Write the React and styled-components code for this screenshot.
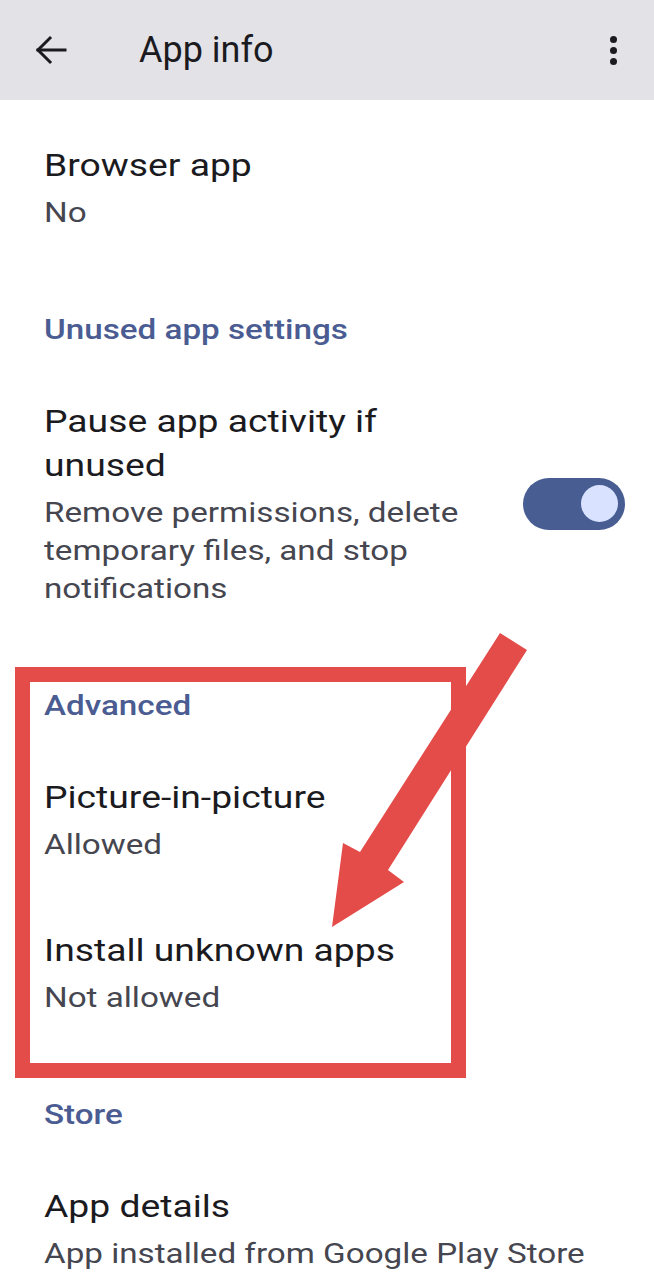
import React from 'react'
import styled, { createGlobalStyle } from 'styled-components'

// the phone screenshot is wider than tall in its pixels, so body text is stretched a little
const STRETCH = 1.165

const GlobalStyle = createGlobalStyle`
body {
    margin: 0;
    background: #fff;
    font-family: Roboto, "Liberation Sans", sans-serif;
}
`

const Screen = styled.div`
position: relative;
width: 654px;
height: 1280px;
overflow: hidden;
background: #fff;
`

const TopBar = styled.header`
display: flex;
align-items: center;
height: 100px;
background: #e3e2e7;
`

const BackButton = styled.div`
display: flex;
margin-left: 35px;
width: 32px;
height: 30px;
`

const BarTitle = styled.h1`
margin: 0 0 0 72px;
font-size: 36px;
font-weight: 400;
line-height: 100px;
color: #1b1b1f;
`

const MoreButton = styled.div`
display: flex;
flex-direction: column;
gap: 4px;
margin-left: auto;
margin-right: 37px;
`

const Dot = styled.span`
width: 7px;
height: 7px;
border-radius: 50%;
background: #1b1b1f;
`

const List = styled.div`
margin-top: 11px;
`

const Item = styled.div`
display: flex;
align-items: center;
gap: 24px;
padding: 32px 29px 32px 44px;
`

const ItemText = styled.div`
flex: 1;
min-width: 0;
`

const Wide = styled.div`
width: calc(100% / ${STRETCH});
transform: scaleX(${STRETCH});
transform-origin: 0 0;
`

const ItemTitle = styled.div`
font-size: 32px;
line-height: 44px;
color: #1b1b1f;
`

const ItemSummary = styled.div`
margin-top: 7px;
font-size: 28.5px;
line-height: 38px;
color: #45464f;
`

const SectionHeader = styled.div`
padding: 47px 29px 18px 44px;
`

const SectionTitle = styled.div`
font-size: 28.5px;
font-weight: 500;
line-height: 38px;
color: #4a5c92;
`

const Switch = styled.div`
flex-shrink: 0;
display: flex;
align-items: center;
justify-content: flex-end;
box-sizing: border-box;
width: 102px;
height: 52px;
padding-right: 7px;
border-radius: 26px;
background: ${props => props.on ? '#485d92' : '#74777f'};
`

const Knob = styled.span`
width: 37px;
height: 37px;
border-radius: 50%;
background: #d9e2ff;
`

const Markup = styled.svg`
position: absolute;
top: 0;
left: 0;
pointer-events: none;
`

const Section = ({ title }) => (
    <SectionHeader>
        <Wide>
            <SectionTitle>{title}</SectionTitle>
        </Wide>
    </SectionHeader>
)

const Pref = ({ title, summary, toggle }) => (
    <Item>
        <ItemText>
            <Wide>
                <ItemTitle>{title}</ItemTitle>
                <ItemSummary>{summary}</ItemSummary>
            </Wide>
        </ItemText>
        {toggle && <Switch on><Knob /></Switch>}
    </Item>
)

export default function App() {
    return (
        <Screen>
            <GlobalStyle />
            <TopBar>
                <BackButton>
                    <svg width="32" height="30" viewBox="0 0 32 30" fill="none" stroke="#1b1b1f" strokeWidth="3" strokeLinecap="square">
                        <path d="M3 15H30" />
                        <path d="M15 3L3 15L15 27" />
                    </svg>
                </BackButton>
                <BarTitle>App info</BarTitle>
                <MoreButton>
                    <Dot /><Dot /><Dot />
                </MoreButton>
            </TopBar>

            <List>
                <Pref title="Browser app" summary="No" />
                <Section title="Unused app settings" />
                <Pref
                    title="Pause app activity if unused"
                    summary="Remove permissions, delete temporary files, and stop notifications"
                    toggle
                />
                <Section title="Advanced" />
                <Pref title="Picture-in-picture" summary="Allowed" />
                <Pref title="Install unknown apps" summary="Not allowed" />
                <Section title="Store" />
                <Pref title="App details" summary="App installed from Google Play Store" />
            </List>

            <Markup width="654" height="1280" viewBox="0 0 654 1280">
                <rect x="22.5" y="674.5" width="436" height="396" fill="none" stroke="#e44c4a" strokeWidth="15" />
                <polygon points="500,633 527,650 388,870 404,882 332,927 343,843 360,852" fill="#e44c4a" />
            </Markup>
        </Screen>
    )
}
